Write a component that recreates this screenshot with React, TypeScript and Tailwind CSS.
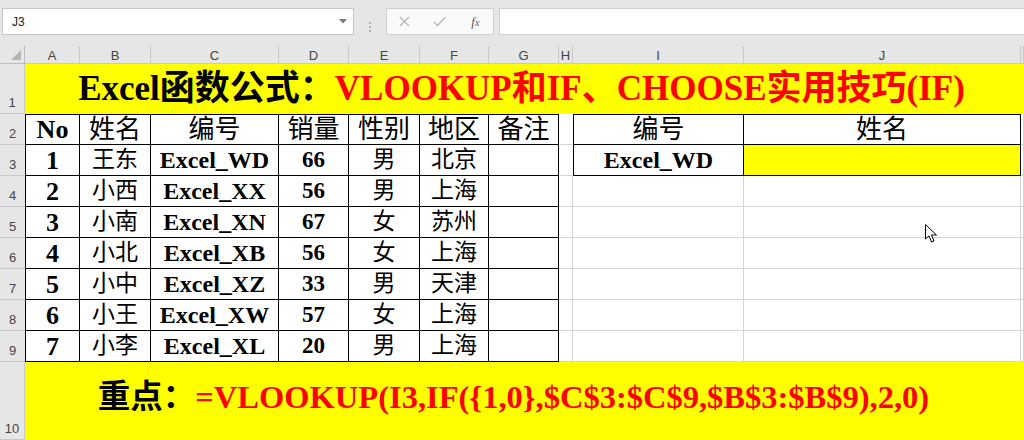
import React from 'react';

const serif = "font-['Liberation_Serif','Noto_Sans_CJK_SC',serif]";
const ui = "font-['Liberation_Sans','Noto_Sans',sans-serif]";

const rows = [
  { no: 1, name: '王东', code: 'Excel_WD', qty: 66, sex: '男', area: '北京' },
  { no: 2, name: '小西', code: 'Excel_XX', qty: 56, sex: '男', area: '上海' },
  { no: 3, name: '小南', code: 'Excel_XN', qty: 67, sex: '女', area: '苏州' },
  { no: 4, name: '小北', code: 'Excel_XB', qty: 56, sex: '女', area: '上海' },
  { no: 5, name: '小中', code: 'Excel_XZ', qty: 33, sex: '男', area: '天津' },
  { no: 6, name: '小王', code: 'Excel_XW', qty: 57, sex: '女', area: '上海' },
  { no: 7, name: '小李', code: 'Excel_XL', qty: 20, sex: '男', area: '上海' },
];

const cols = ['A', 'B', 'C', 'D', 'E', 'F', 'G', 'H', 'I', 'J', ''];

const Cell: React.FC<{ className?: string; children?: React.ReactNode }> = ({ className = '', children }) => (
  <div className={`flex items-center justify-center overflow-hidden whitespace-nowrap ${className}`}>{children}</div>
);

const RowHead: React.FC<{ n: number; edge?: boolean }> = ({ n, edge }) => (
  <div
    className={`flex items-end justify-center bg-[#e6e6e6] border-b border-[#c8c8c8] pb-[1px] text-[13px] text-[#444] ${ui} ${
      edge ? 'border-r' : ''
    }`}
  >
    {n}
  </div>
);

const Toolbar: React.FC = () => (
  <div className="flex h-[46px] bg-[#e6e6e6] pt-[8px] pl-[2px]">
    <div className="flex h-[27px] w-[352px] items-center justify-between border border-[#c6c6c6] bg-white pl-[9px] pr-[6px]">
      <span className={`text-[12px] text-[#222] ${ui}`}>J3</span>
      <svg width="8" height="5" viewBox="0 0 8 5">
        <path d="M0 0 L8 0 L4 4.5 Z" fill="#777" />
      </svg>
    </div>
    <div className="flex w-[32px] flex-col items-center justify-center gap-[2px]">
      <span className="h-[2px] w-[2px] bg-[#b0b0b0]" />
      <span className="h-[2px] w-[2px] bg-[#b0b0b0]" />
      <span className="h-[2px] w-[2px] bg-[#b0b0b0]" />
    </div>
    <div className="flex h-[27px] w-[108px] items-center border border-[#d0d0d0] bg-[#fafafa]">
      <div className="flex w-[36px] justify-center">
        <svg width="11" height="11" viewBox="0 0 11 11">
          <path d="M1 1 L10 10 M10 1 L1 10" stroke="#b5b5b5" strokeWidth="1.3" />
        </svg>
      </div>
      <div className="flex w-[36px] justify-center">
        <svg width="13" height="11" viewBox="0 0 13 11">
          <path d="M1 6 L4.5 9.5 L12 1.5" stroke="#b5b5b5" strokeWidth="1.3" fill="none" />
        </svg>
      </div>
      <div className="flex w-[36px] justify-center">
        <span className={`italic text-[13px] text-[#555] ${serif}`}>
          f<span className="text-[10px]">x</span>
        </span>
      </div>
    </div>
    <div className="ml-[5px] h-[27px] flex-1 border-y border-l border-[#d0d0d0] bg-white" />
  </div>
);

export default function App() {
  const black = 'border-r border-b border-black';
  const gray = 'border-r border-b border-[#d4d4d4]';

  return (
    <div className="relative h-[440px] w-[1024px] overflow-hidden bg-white">
      <Toolbar />
      <div className="grid grid-cols-[25px_55px_71px_128px_70px_71px_69px_70px_14px_171px_277px_1fr] grid-rows-[18px_50px_repeat(8,31px)_78px]">
        {/* column headers */}
        <div className="relative border-r border-b border-[#bdbdbd] bg-[#e6e6e6]">
          <svg className="absolute bottom-[3px] right-[3px]" width="10" height="10" viewBox="0 0 10 10">
            <path d="M10 0 L10 10 L0 10 Z" fill="#b4b4b4" />
          </svg>
        </div>
        {cols.map((c, i) => (
          <div
            key={i}
            className={`flex items-end justify-center border-r border-b border-[#c8c8c8] bg-[#e6e6e6] pb-[1px] text-[13px] leading-none text-[#444] ${ui}`}
          >
            {c}
          </div>
        ))}

        {/* row 1 title */}
        <RowHead n={1} edge />
        <Cell className={`col-span-11 bg-[#ffff00] pr-[6px] text-[35px] font-bold ${serif}`}>
          <span className="text-black">Excel函数公式：</span>
          <span className="text-[#ff0000]">VLOOKUP和IF、CHOOSE实用技巧(IF)</span>
        </Cell>

        {/* row 2 headers */}
        <RowHead n={2} />
        {['No', '姓名', '编号', '销量', '性别', '地区', '备注'].map((h, i) => (
          <Cell
            key={h}
            className={`${black} border-t ${i === 0 ? 'border-l font-bold' : ''} text-[26px] text-black ${serif}`}
          >
            {h}
          </Cell>
        ))}
        <Cell className="border-b border-[#d4d4d4]" />
        <Cell className={`${black} border-t border-l text-[26px] text-black ${serif}`}>编号</Cell>
        <Cell className={`${black} border-t text-[26px] text-black ${serif}`}>姓名</Cell>
        <Cell className={gray} />

        {/* data rows */}
        {rows.map((r, i) => (
          <React.Fragment key={r.no}>
            <RowHead n={i + 3} />
            <Cell className={`${black} border-l text-[26px] font-bold text-black ${serif}`}>{r.no}</Cell>
            <Cell className={`${black} text-[23px] text-black ${serif}`}>{r.name}</Cell>
            <Cell className={`${black} text-[24px] font-bold text-black ${serif}`}>{r.code}</Cell>
            <Cell className={`${black} text-[23px] font-bold text-black ${serif}`}>{r.qty}</Cell>
            <Cell className={`${black} text-[23px] text-black ${serif}`}>{r.sex}</Cell>
            <Cell className={`${black} text-[23px] text-black ${serif}`}>{r.area}</Cell>
            <Cell className={black} />
            {i === 0 ? (
              <>
                <Cell className="border-b border-[#d4d4d4]" />
                <Cell className={`${black} border-l text-[24px] font-bold text-black ${serif}`}>Excel_WD</Cell>
                <Cell className={`${black} bg-[#ffff00]`} />
              </>
            ) : (
              <>
                <Cell className={gray} />
                <Cell className={gray} />
                <Cell className={gray} />
              </>
            )}
            <Cell className={gray} />
          </React.Fragment>
        ))}

        {/* row 10 formula */}
        <RowHead n={10} edge />
        <Cell className={`col-span-11 bg-[#ffff00] pb-[8px] pr-[22px] text-[32.5px] font-bold ${serif}`}>
          <span className="text-black">重点：</span>
          <span className="text-[#ff0000]">=VLOOKUP(I3,IF({'{'}1,0{'}'},$C$3:$C$9,$B$3:$B$9),2,0)</span>
        </Cell>
      </div>

      {/* mouse pointer */}
      <svg className="absolute left-[925px] top-[224px]" width="13" height="20" viewBox="0 0 13 20">
        <path
          d="M0.5 0.5 L0.5 15 L4 11.8 L6.6 18 L9 17 L6.5 11 L11.5 11 Z"
          fill="#fff"
          stroke="#000"
          strokeWidth="1"
          strokeLinejoin="round"
        />
      </svg>
    </div>
  );
}
